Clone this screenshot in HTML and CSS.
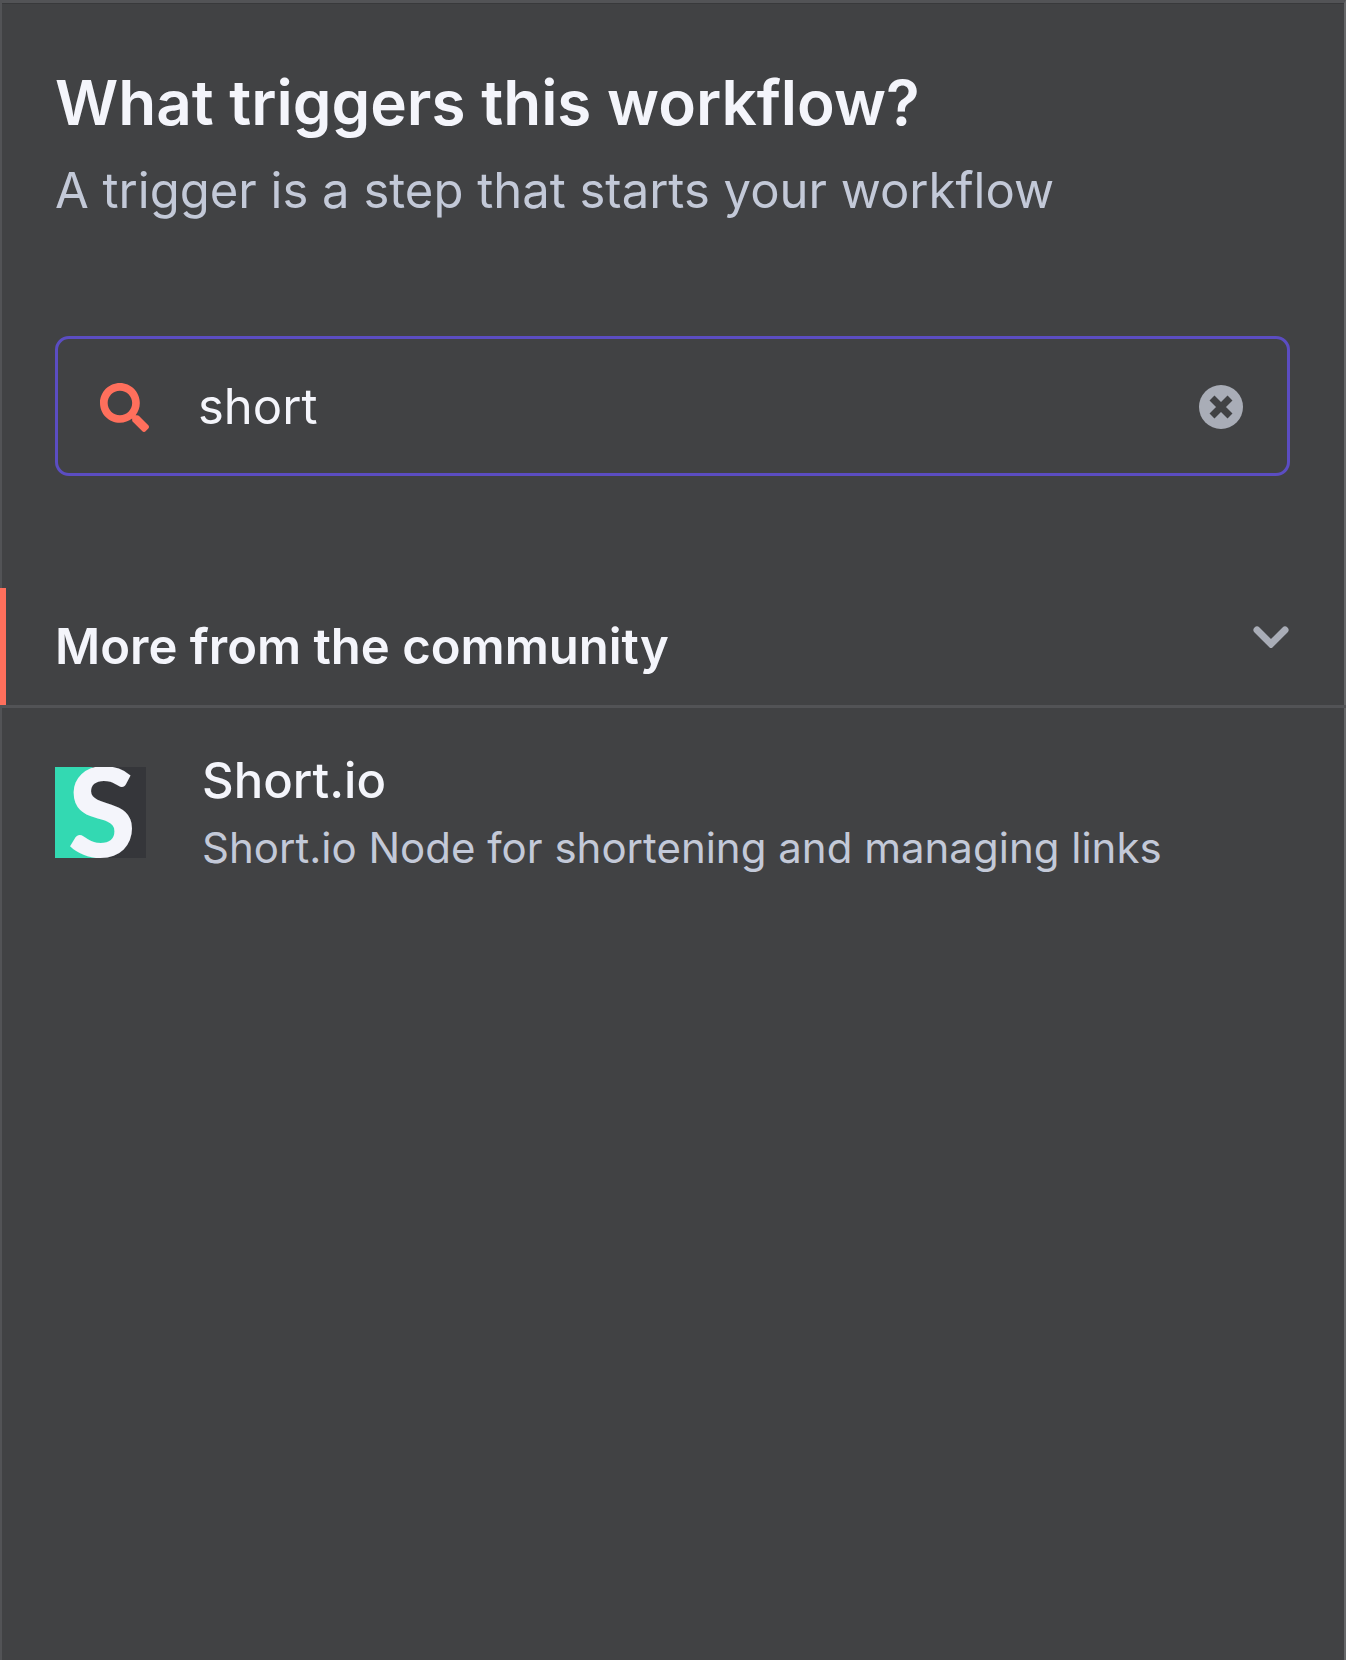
FILE: index.html
```html
<!DOCTYPE html>
<html lang="en">
<head>
<meta charset="utf-8">
<meta name="viewport" content="width=device-width, initial-scale=1">
<title>What triggers this workflow?</title>
<link rel="stylesheet" href="styles.css">
</head>
<body>
<main class="panel">
  <header class="header">
    <h1 class="title">What triggers this workflow?</h1>
    <p class="subtitle">A trigger is a step that starts your workflow</p>
  </header>
  <form class="search">
    <svg class="search-icon" viewBox="0 0 512 512" aria-hidden="true"><path fill="currentColor" d="M505 442.700 405.300 343c-4.500-4.500-10.600-7-17-7H372c27.600-35.300 44-79.700 44-128C416 93.100 322.900 0 208 0S0 93.100 0 208s93.100 208 208 208c48.300 0 92.700-16.400 128-44v16.300c0 6.400 2.500 12.500 7 17l99.700 99.700c9.400 9.400 24.600 9.400 33.900 0l28.300-28.300c9.400-9.400 9.400-24.600.1-34zM208 336c-70.700 0-128-57.200-128-128 0-70.700 57.200-128 128-128 70.700 0 128 57.200 128 128 0 70.700-57.200 128-128 128z"/></svg>
    <input class="search-input" type="text" value="short" aria-label="Search nodes">
    <button class="clear" type="reset" aria-label="Clear search">
      <svg class="clear-icon" viewBox="0 0 44 44" aria-hidden="true"><circle cx="22" cy="22" r="22" fill="currentColor"/><path class="clear-cross" d="M13 13 31 31M31 13 13 31"/></svg>
    </button>
  </form>
  <section class="category">
    <button class="category-header" type="button" aria-expanded="true">
      <span class="category-name">More from the community</span>
      <svg class="chevron" viewBox="0 0 36 22" aria-hidden="true"><path d="M4 4 18 18 32 4"/></svg>
    </button>
    <a class="node" href="#short-io">
      <svg class="node-logo" viewBox="0 0 91 91" aria-hidden="true">
        <rect width="91" height="91" fill="#35363a"/>
        <path fill="#33d9b2" d="M0 0H38L27 12V34L66 58V78L45 91H0Z"/>
        <text class="logo-letter" x="47" y="90" text-anchor="middle">S</text>
      </svg>
      <span class="node-text">
        <span class="node-name">Short.io</span>
        <span class="node-description">Short.io Node for shortening and managing links</span>
      </span>
    </a>
  </section>
</main>
</body>
</html>
```
FILE: styles.css
```css
* {
  box-sizing: border-box;
}

body {
  margin: 0;
  background: #414244;
  color: #f4f5fb;
  font-family: Inter, "Liberation Sans", sans-serif;
  font-size: 49px;
  line-height: 64px;
}

.panel {
  min-height: 100vh;
  border: solid #525356;
  border-width: 3px 2px 0;
  border-right-color: #666769;
  box-shadow: inset 0 1px #38393b;
}

.header {
  padding: 60px 53px 0;
}

.title {
  margin: 0;
  font-size: 62px;
  font-weight: 600;
  line-height: 80px;
}

.subtitle {
  margin: 16px 0 0;
  color: #c3c9d8;
}

.search {
  display: flex;
  align-items: center;
  height: 140px;
  margin: 113px 54px 0 53px;
  padding: 2px 44px 0 42px;
  border: 3px solid #5b4dc2;
  border-radius: 14px;
}

.search-icon {
  flex: none;
  width: 49px;
  height: 49px;
  color: #ff6f5c;
}

.search-input {
  flex: 1;
  min-width: 0;
  height: 64px;
  margin: 0 24px 0 49px;
  padding: 0;
  border: 0;
  outline: 0;
  background: none;
  color: inherit;
  font: inherit;
}

.clear {
  display: flex;
  flex: none;
  padding: 0;
  border: 0;
  background: none;
  color: #a9adb7;
}

.clear-icon {
  width: 44px;
  height: 44px;
}

.clear-cross {
  stroke: #414244;
  stroke-width: 7;
}

.category {
  margin: 112px -2px 0;
}

.category-header {
  display: flex;
  align-items: flex-start;
  justify-content: space-between;
  width: 100%;
  height: 120px;
  padding: 27px 57px 0 49px;
  border: solid #525356;
  border-width: 0 0 3px;
  background: linear-gradient(#ff6f5c, #ff6f5c) left / 6px 100% no-repeat;
  color: inherit;
  font: inherit;
  font-weight: 600;
  text-align: left;
}

.category-name {
  padding-left: 6px;
}

.chevron {
  flex: none;
  width: 36px;
  height: 22px;
  margin-top: 11px;
  fill: none;
  stroke: #a9adb7;
  stroke-width: 7;
  stroke-linecap: round;
}

.node {
  display: flex;
  align-items: center;
  gap: 56px;
  padding: 41px 55px;
  color: inherit;
  text-decoration: none;
}

.node-logo {
  flex: none;
  width: 91px;
  height: 91px;
}

.logo-letter {
  fill: #f4f5fb;
  font-family: Lato, sans-serif;
  font-size: 124px;
  font-weight: 900;
}

.node-text {
  display: flex;
  flex-direction: column;
  gap: 7px;
}

.node-name {
  font-weight: 500;
}

.node-description {
  color: #c3c9d8;
  font-size: 42px;
  line-height: 56px;
}
```
